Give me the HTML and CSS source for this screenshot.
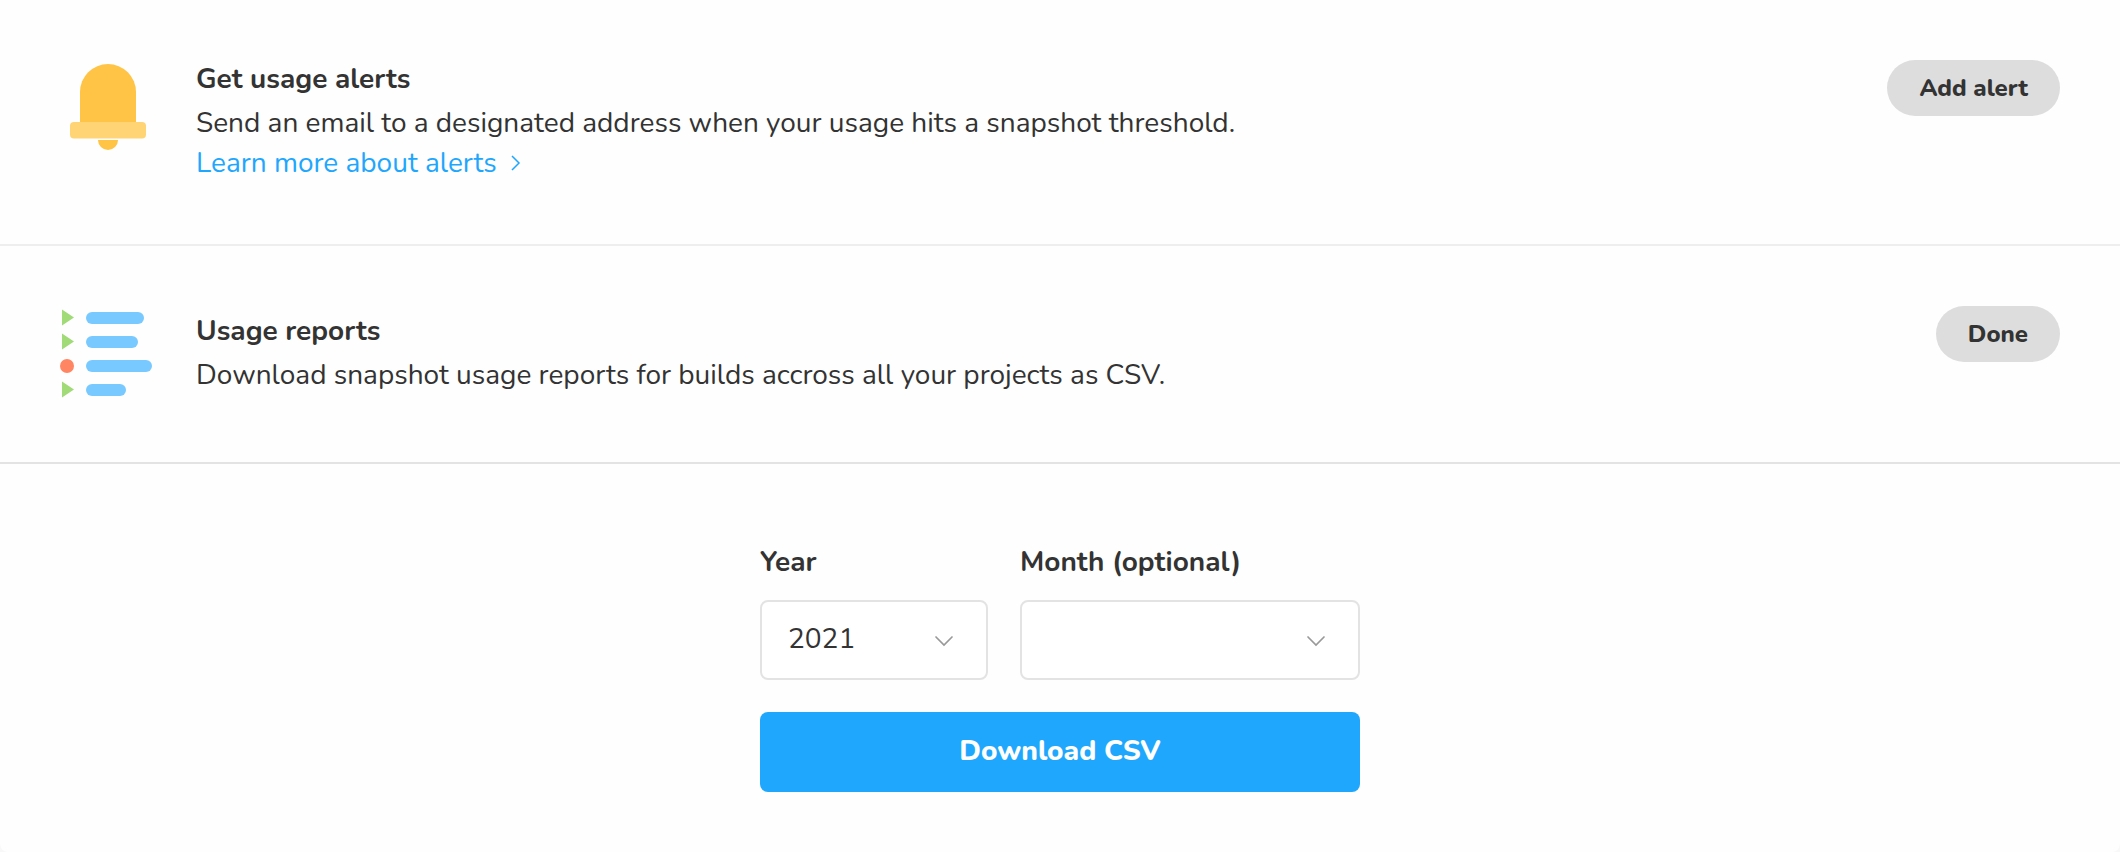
FILE: index.html
```html
<!DOCTYPE html>
<html lang="en">
<head>
<meta charset="utf-8">
<meta name="viewport" content="width=device-width, initial-scale=1">
<title>Usage</title>
<link rel="stylesheet" href="styles.css">
</head>
<body>
<main class="card">
  <section class="row">
    <svg class="row-icon" viewBox="0 0 96 96" aria-hidden="true">
      <path fill="#ffc445" d="M20 64V32a28 28 0 0 1 56 0v32z"/>
      <rect fill="#ffd475" x="10" y="62" width="76" height="16.500" rx="4"/>
      <path fill="#ffc445" d="M38 80h20a10 10 0 0 1-20 0z"/>
    </svg>
    <div class="row-text">
      <h2 class="title">Get usage alerts</h2>
      <p class="description">Send an email to a designated address when your usage hits a snapshot threshold.</p>
      <a class="link" href="#">Learn more about alerts<svg class="link-arrow" viewBox="0 0 10 16" aria-hidden="true"><path d="M1 1 8 8 1 15"/></svg></a>
    </div>
    <button class="pill" type="button">Add alert</button>
  </section>
  <section class="row">
    <svg class="row-icon" viewBox="0 0 96 96" aria-hidden="true">
      <path fill="#a0db77" d="M2 3.500 14 11.500 2 19.500zM2 27.500l12 8-12 8zM2 75.500l12 8-12 8z"/>
      <circle fill="#ff8563" cx="7" cy="60" r="7"/>
      <g fill="#78c9ff">
        <rect x="26" y="6" width="58" height="12" rx="6"/>
        <rect x="26" y="30" width="52" height="12" rx="6"/>
        <rect x="26" y="54" width="66" height="12" rx="6"/>
        <rect x="26" y="78" width="40" height="12" rx="6"/>
      </g>
    </svg>
    <div class="row-text">
      <h2 class="title">Usage reports</h2>
      <p class="description">Download snapshot usage reports for builds accross all your projects as CSV.</p>
    </div>
    <button class="pill" type="button">Done</button>
  </section>
  <form class="report">
    <div class="field">
      <label class="label" for="year">Year</label>
      <div class="select">
        <select class="select-control" id="year"><option>2021</option></select>
        <svg class="select-arrow" viewBox="0 0 20 12" aria-hidden="true"><path d="M2 2l8 8 8-8"/></svg>
      </div>
    </div>
    <div class="field">
      <label class="label" for="month">Month (optional)</label>
      <div class="select">
        <select class="select-control" id="month"><option></option></select>
        <svg class="select-arrow" viewBox="0 0 20 12" aria-hidden="true"><path d="M2 2l8 8 8-8"/></svg>
      </div>
    </div>
    <button class="download" type="submit">Download CSV</button>
  </form>
</main>
</body>
</html>
```
FILE: styles.css
```css
* {
  box-sizing: border-box;
}

body {
  margin: 0;
  background: #f8f8f8;
  color: #333;
  font: 28px/40px Nunito, "Open Sans", "Noto Sans", sans-serif;
}

.card {
  min-height: 100vh;
  background: #fefefe;
  border-radius: 0 0 8px 8px;
}

.row {
  display: flex;
  align-items: flex-start;
  gap: 40px;
  padding: 60px;
  border-bottom: 2px solid #eee;
}

.row + .row {
  border-bottom-color: #e3e3e3;
}

.row-icon {
  flex: none;
  width: 96px;
  height: 96px;
}

.row-text {
  flex: 1;
  align-self: center;
  margin: -1px 0 1px;
}

.title {
  margin: 0 0 4px;
  font-size: 28px;
  font-weight: 700;
}

.description {
  margin: 0;
}

.link {
  display: inline-flex;
  align-items: center;
  gap: 14px;
  color: #1ea7fd;
  text-decoration: none;
}

.link-arrow {
  width: 10px;
  height: 16px;
  fill: none;
  stroke: currentColor;
  stroke-width: 1.5;
}

.pill {
  flex: none;
  height: 56px;
  padding: 0 32px;
  border: 0;
  border-radius: 28px;
  background: #ddd;
  color: #333;
  font: 800 24px/32px Nunito, "Open Sans", "Noto Sans", sans-serif;
}

.report {
  display: grid;
  grid-template-columns: 228fr 340fr;
  gap: 32px;
  max-width: 600px;
  margin: 0 auto;
  padding: 78px 0 60px;
}

.label {
  display: block;
  margin-bottom: 18px;
  font-weight: 700;
}

.select {
  position: relative;
}

.select-control {
  appearance: none;
  display: block;
  width: 100%;
  height: 80px;
  padding: 0 64px 2px 26px;
  border: 2px solid #e3e3e3;
  border-radius: 8px;
  background: #fff;
  color: #333;
  font: inherit;
}

.select-arrow {
  position: absolute;
  top: 35px;
  right: 34px;
  width: 20px;
  height: 12px;
  fill: none;
  stroke: #999;
  stroke-width: 1.7;
  stroke-linecap: round;
  pointer-events: none;
}

.download {
  grid-column: 1 / -1;
  height: 80px;
  padding: 0 0 2px;
  border: 0;
  border-radius: 8px;
  background: #1ea7fd;
  color: #fff;
  font: inherit;
  font-weight: 800;
}
```
